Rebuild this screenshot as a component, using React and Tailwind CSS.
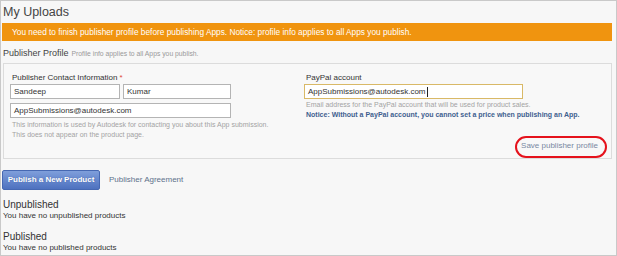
import React from 'react';

const Field = ({ value, width, focused, caret }) => (
  <div
    className={`flex h-[15px] items-center bg-white pl-[3px] text-[8px] leading-[10px] text-[#333] ${width} ${
      focused ? 'border border-[#d9b967]' : 'border border-[#b4b4b4]'
    }`}
  >
    <span className="whitespace-nowrap">{value}</span>
    {caret && <span className="ml-[1px] h-[10px] w-px bg-[#222]" />}
  </div>
);

const App = () => {
  return (
    <div className="h-[256px] w-[617px] overflow-hidden border border-[#c9c9c9] bg-[#f7f7f7] font-['Liberation_Sans',Arial,sans-serif] text-[#333]">
      <h1 className="ml-[2px] mt-[4px] text-[12.5px] leading-[14px] text-[#444]">My Uploads</h1>

      <div className="ml-[1px] mt-[4px] h-[18px] w-[610px] bg-[#f0940f] pl-[10px] text-[8.3px] leading-[18px] text-white">
        You need to finish publisher profile before publishing Apps. Notice: profile info applies to all Apps you publish.
      </div>

      <div className="ml-[2px] mt-[6px] flex items-baseline gap-[3px] leading-[12px]">
        <span className="text-[9px] text-[#444]">Publisher Profile</span>
        <span className="text-[6.8px] text-[#999]">Profile info applies to all Apps you publish.</span>
      </div>

      <div className="ml-[2px] mt-[3px] flex h-[96px] w-[609px] flex-col border border-[#dcdcdc] bg-[#f8f8f8]">
        <div className="flex pl-[6px] pt-[9px]">
          <div className="w-[294px]">
            <p className="pl-[2px] text-[8px] leading-[10px] text-[#333]">
              Publisher Contact Information <span className="text-[#e0483c]">*</span>
            </p>
            <div className="mt-[1px] flex gap-[3px]">
              <Field value="Sandeep" width="w-[110px]" />
              <Field value="Kumar" width="w-[108px]" />
            </div>
            <div className="mt-[4px]">
              <Field value="AppSubmissions@autodesk.com" width="w-[221px]" />
            </div>
            <div className="mt-[2px] pl-[2px] text-[7px] leading-[10px] text-[#a3a3a3]">
              <p>This information is used by Autodesk for contacting you about this App submission.</p>
              <p>This does not appear on the product page.</p>
            </div>
          </div>

          <div>
            <p className="pl-[2px] text-[8px] leading-[10px] text-[#333]">PayPal account</p>
            <div className="mt-[1px]">
              <Field value="AppSubmissions@autodesk.com" width="w-[219px]" focused caret />
            </div>
            <div className="mt-[1px] pl-[2px] text-[7px] leading-[10px]">
              <p className="text-[#a3a3a3]">Email address for the PayPal account that will be used for product sales.</p>
              <p className="font-bold text-[#3f5f8f]">
                Notice: Without a PayPal account, you cannot set a price when publishing an App.
              </p>
            </div>
          </div>
        </div>

        <div className="mt-auto flex justify-end pb-[7.5px] pr-[13px]">
          <span className="relative text-[8px] leading-[10px] text-[#7888a2]">
            Save publisher profile
            <span className="absolute -bottom-[7px] -left-[6px] -right-[9px] -top-[5px] rounded-[11px] border-2 border-[#e5121c]" />
          </span>
        </div>
      </div>

      <div className="ml-[1px] mt-[11px] flex items-center">
        <button className="h-[20px] w-[98px] rounded-[2px] border border-[#4668b2] bg-gradient-to-b from-[#7f9edb] to-[#4e71bf] text-[8px] font-bold text-white [text-shadow:0_0_1px_rgba(40,60,120,0.5)]">
          Publish a New Product
        </button>
        <span className="ml-[9px] text-[8px] text-[#5d718b]">Publisher Agreement</span>
      </div>

      <div className="ml-[2px] mt-[9px]">
        <h2 className="text-[10px] leading-[12px] text-[#333]">Unpublished</h2>
        <p className="text-[8px] leading-[10px] text-[#333]">You have no unpublished products</p>
        <h2 className="mt-[10px] text-[10px] leading-[12px] text-[#333]">Published</h2>
        <p className="text-[8px] leading-[10px] text-[#333]">You have no published products</p>
      </div>
    </div>
  );
};

export default App;
